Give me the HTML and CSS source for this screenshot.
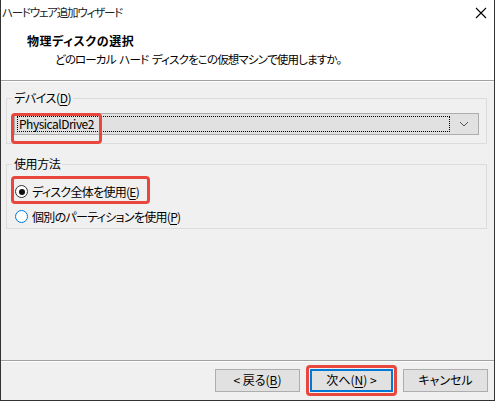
FILE: index.html
```html
<!DOCTYPE html>
<html lang="ja">
<head>
<meta charset="utf-8">
<title>ハードウェア追加ウィザード</title>
<link rel="stylesheet" href="styles.css">
</head>
<body>
<div class="window">
  <div class="titlebar">
    <span class="title">ハードウェア追加ウィザード</span>
    <svg class="close" width="12" height="12" viewBox="0 0 12 12"><path d="M1 1 L11 11 M11 1 L1 11" stroke="#000" stroke-width="1.1" fill="none"/></svg>
  </div>
  <div class="header">
    <div class="h-title">物理ディスクの選択</div>
    <div class="h-sub">どのローカル ハード ディスクをこの仮想マシンで使用しますか。</div>
  </div>
  <div class="body">
    <fieldset class="group g-device">
      <legend>デバイス(<u>D</u>)</legend>
      <div class="combo">
        <div class="combo-field"><span class="combo-text">PhysicalDrive2</span></div>
        <svg class="combo-arrow" width="10" height="6" viewBox="0 0 10 6"><path d="M1 1 L5 5 L9 1" stroke="#555" stroke-width="1" fill="none"/></svg>
      </div>
      <span class="mark mark-drive"></span>
    </fieldset>
    <fieldset class="group g-usage">
      <legend>使用方法</legend>
      <label class="radio-row">
        <span class="radio checked"></span>
        <span class="rtext">ディスク全体を使用(<u>E</u>)</span>
      </label>
      <label class="radio-row">
        <span class="radio hover"></span>
        <span class="rtext">個別のパーティションを使用(<u>P</u>)</span>
      </label>
      <span class="mark mark-radio"></span>
    </fieldset>
  </div>
  <div class="footer">
    <button class="btn">&lt; 戻る(<u>B</u>)</button>
    <span class="btn-wrap">
      <button class="btn default">次へ(<u>N</u>) &gt;</button>
      <span class="mark mark-next"></span>
    </span>
    <button class="btn">キャンセル</button>
  </div>
</div>
</body>
</html>
```

FILE: styles.css
```css
* { box-sizing: border-box; }
html, body { margin: 0; padding: 0; background: #fff; }
body {
  font-family: "Noto Sans CJK JP", "Noto Sans", sans-serif;
  font-size: 12px;
  font-feature-settings: "palt";
  color: #000;
}
u { text-decoration: underline; text-underline-offset: 2px; }
.window {
  width: 495px;
  height: 401px;
  border: 1px solid #333;
  border-top: 0;
  display: flex;
  flex-direction: column;
  background: #f0f0f0;
}
.titlebar {
  height: 26px;
  background: #fff;
  display: flex;
  align-items: center;
  justify-content: space-between;
  padding: 0 7px 0 1px;
}
.title { color: #222; line-height: 1; font-size: 11.5px; letter-spacing: -1.2px; }
.close { display: block; }
.header {
  height: 55px;
  background: #fff;
  border-bottom: 1px solid #a0a0a0;
  padding: 7px 0 0 26px;
}
.h-title { font-weight: bold; line-height: 16px; letter-spacing: 0.6px; }
.h-sub { padding-left: 28px; line-height: 18px; margin-top: 1px; font-size: 11.5px; letter-spacing: -0.85px; word-spacing: 2px; }
.body {
  flex: 1;
  padding: 7px 7px 0 5px;
  border-top: 1px solid #fff;
}
.group {
  position: relative;
  margin: 0;
  border: 1px solid #dcdcdc;
  padding: 0 7px;
}
.group legend {
  padding: 0 2px;
  margin-left: -2px;
  line-height: 18px;
  letter-spacing: -0.4px;
}
.g-device { height: 55px; padding-top: 6px; }
.combo {
  height: 22px;
  background: #e1e1e1;
  border: 1px solid #adadad;
  display: flex;
  align-items: center;
  padding: 2px;
}
.combo-field {
  flex: 1;
  height: 16px;
  border: 1px dotted #000;
  display: flex;
  align-items: center;
  padding-left: 1px;
}
.combo-text { line-height: 14px; letter-spacing: -0.5px; }
.combo-arrow { margin: 0 7px 0 9px; }
.g-usage { margin-top: 11px; height: 74px; padding-top: 6px; }
.radio-row {
  display: flex;
  align-items: center;
  gap: 4px;
  height: 25px;
  padding-left: 1px;
}
.rtext { letter-spacing: -0.7px; }
.radio {
  width: 13px;
  height: 13px;
  border-radius: 50%;
  border: 1px solid #333;
  background: #fff;
  position: relative;
  flex: none;
}
.radio.checked::after {
  content: "";
  position: absolute;
  left: 2.5px; top: 2.5px;
  width: 6px; height: 6px;
  border-radius: 50%;
  background: #111;
}
.radio.hover { border-color: #0078d7; }
.mark {
  position: absolute;
  border: 3px solid #e8473d;
  border-radius: 4px;
  pointer-events: none;
}
.mark-drive { left: 4px; top: 6px; width: 91px; height: 31px; }
.mark-radio { left: 4px; top: 3px; width: 139px; height: 28px; }
.footer {
  height: 40px;
  border-top: 1px solid #a0a0a0;
  display: flex;
  justify-content: flex-end;
  align-items: center;
  gap: 10px;
  padding: 0 6px 1px 0;
  box-shadow: inset 0 1px 0 #fff;
}
.btn {
  font: inherit;
  font-feature-settings: "palt";
  width: 85px;
  height: 23px;
  background: #e1e1e1;
  border: 1px solid #adadad;
  padding: 0;
  color: #000;
  line-height: 1;
}
.btn.default { border: 2px solid #0078d7; width: 83px; }
.btn-wrap { position: relative; display: flex; }
.mark-next { left: -4px; top: -4px; right: -4px; bottom: -4px; }
```
